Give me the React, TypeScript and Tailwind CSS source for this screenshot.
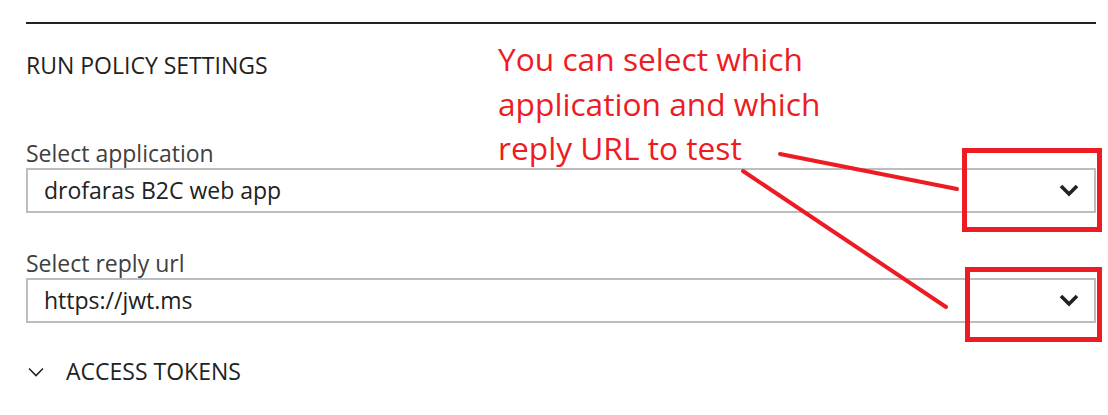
const uiFont = { fontFamily: '"Open Sans", "Noto Sans", sans-serif' };

function Caret() {
  return (
    <svg width="20" height="13" viewBox="0 0 20 13" className="shrink-0">
      <path d="M2 2 L10 10 L18 2" fill="none" stroke="#222" strokeWidth="3.6" />
    </svg>
  );
}

function SmallChevron() {
  return (
    <svg width="16" height="10" viewBox="0 0 16 10" className="shrink-0">
      <path d="M1 1.5 L8 8.5 L15 1.5" fill="none" stroke="#222" strokeWidth="1.6" />
    </svg>
  );
}

function SelectBox({ label, value, first }: { label: string; value: string; first?: boolean }) {
  return (
    <div className={first ? "mt-[65px]" : "mt-[39px]"}>
      <div className="text-[23px] leading-[23px] text-[#404040]">{label}</div>
      <div className="mt-[3px] flex h-[45px] items-center justify-between border-2 border-[#bdbdbd] pl-[16px] pr-[15px] text-[23px] leading-[23px] text-[#222]">
        <span>{value}</span>
        <Caret />
      </div>
    </div>
  );
}

export default function App() {
  return (
    <div className="relative h-[415px] w-[1108px] overflow-hidden bg-white" style={uiFont}>
      <div className="pl-[26px] pr-[12px]">
        <div className="mt-[22px] h-[2px] bg-[#222]" />
        <div className="mt-[30px] text-[23px] leading-[23px] text-[#222]">RUN POLICY SETTINGS</div>
        <SelectBox first label="Select application" value="drofaras B2C web app" />
        <SelectBox label="Select reply url" value="https://jwt.ms" />
        <div className="mt-[37px] flex items-center text-[23px] leading-[23px] text-[#222]">
          <span className="ml-[2px]">
            <SmallChevron />
          </span>
          <span className="ml-[22px]">ACCESS TOKENS</span>
        </div>
      </div>

      {/* annotation overlay */}
      <div
        className="absolute left-[498px] top-[37px] text-[31.7px] leading-[44.5px] text-[#ed1c24]"
        style={{ fontFamily: '"Open Sans", sans-serif' }}
      >
        <div>You can select which</div>
        <div>application and which</div>
        <div>reply URL to test</div>
      </div>
      <svg className="pointer-events-none absolute left-0 top-0" width="1108" height="415">
        <g stroke="#ed1c24" fill="none">
          <line x1="780" y1="154" x2="957" y2="189" strokeWidth="4" strokeLinecap="round" />
          <line x1="743" y1="171" x2="946" y2="307" strokeWidth="4" strokeLinecap="round" />
          <rect x="964.5" y="150.5" width="135" height="79" strokeWidth="5" />
          <rect x="967.5" y="269.5" width="132" height="70" strokeWidth="5" />
        </g>
      </svg>
    </div>
  );
}
